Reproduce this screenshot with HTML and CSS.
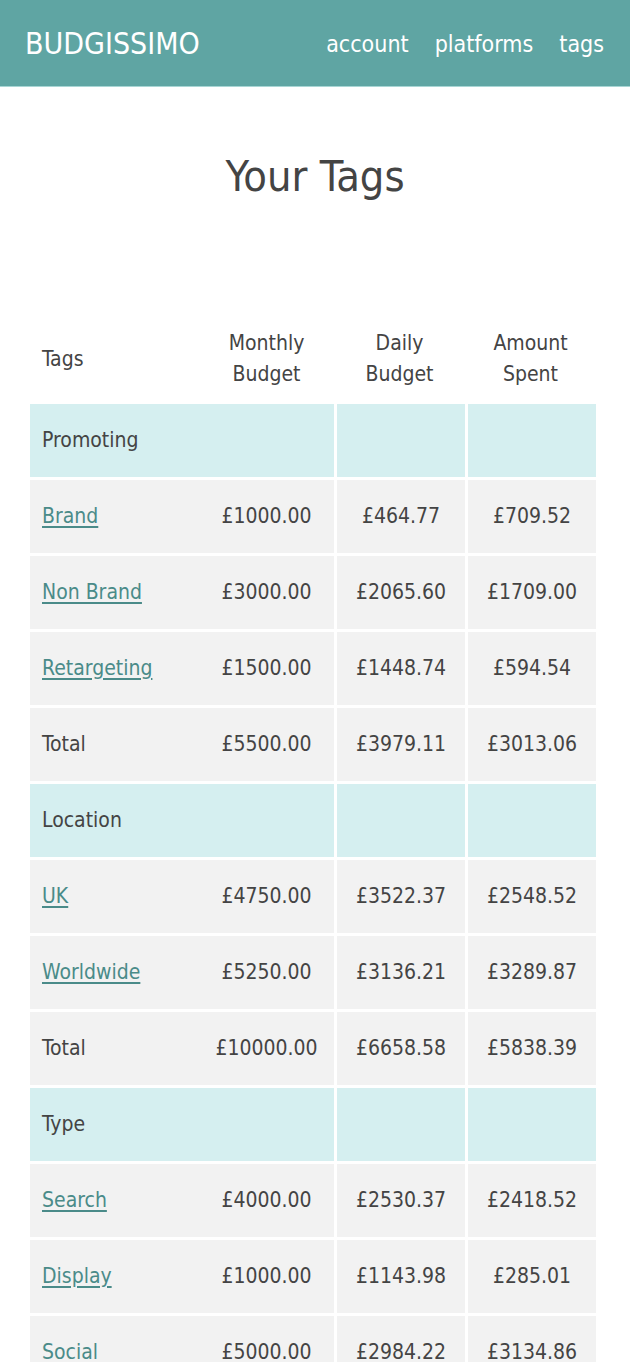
FILE: index.html
```html
<!DOCTYPE html>
<html lang="en">
<head>
<meta charset="utf-8">
<title>Budgissimo - Your Tags</title>
<link rel="stylesheet" href="styles.css">
</head>
<body>
<header class="topbar">
  <a class="logo" href="#">BUDGISSIMO</a>
  <nav class="nav">
    <a href="#">account</a>
    <a href="#">platforms</a>
    <a href="#">tags</a>
  </nav>
</header>
<main class="content">
  <h1 class="title">Your Tags</h1>
  <table class="tags">
    <colgroup>
      <col class="c1"><col class="c2"><col class="c3"><col class="c4">
    </colgroup>
    <thead>
      <tr>
        <th class="name">Tags</th>
        <th>Monthly<br>Budget</th>
        <th>Daily<br>Budget</th>
        <th>Amount<br>Spent</th>
      </tr>
    </thead>
    <tbody>
      <tr class="group"><td class="name">Promoting</td><td></td><td class="sep"></td><td class="sep"></td></tr>
      <tr><td class="name"><a href="#">Brand</a></td><td>£1000.00</td><td class="sep">£464.77</td><td class="sep">£709.52</td></tr>
      <tr><td class="name"><a href="#">Non Brand</a></td><td>£3000.00</td><td class="sep">£2065.60</td><td class="sep">£1709.00</td></tr>
      <tr><td class="name"><a href="#">Retargeting</a></td><td>£1500.00</td><td class="sep">£1448.74</td><td class="sep">£594.54</td></tr>
      <tr><td class="name">Total</td><td>£5500.00</td><td class="sep">£3979.11</td><td class="sep">£3013.06</td></tr>
      <tr class="group"><td class="name">Location</td><td></td><td class="sep"></td><td class="sep"></td></tr>
      <tr><td class="name"><a href="#">UK</a></td><td>£4750.00</td><td class="sep">£3522.37</td><td class="sep">£2548.52</td></tr>
      <tr><td class="name"><a href="#">Worldwide</a></td><td>£5250.00</td><td class="sep">£3136.21</td><td class="sep">£3289.87</td></tr>
      <tr><td class="name">Total</td><td>£10000.00</td><td class="sep">£6658.58</td><td class="sep">£5838.39</td></tr>
      <tr class="group"><td class="name">Type</td><td></td><td class="sep"></td><td class="sep"></td></tr>
      <tr><td class="name"><a href="#">Search</a></td><td>£4000.00</td><td class="sep">£2530.37</td><td class="sep">£2418.52</td></tr>
      <tr><td class="name"><a href="#">Display</a></td><td>£1000.00</td><td class="sep">£1143.98</td><td class="sep">£285.01</td></tr>
      <tr><td class="name"><a href="#">Social</a></td><td>£5000.00</td><td class="sep">£2984.22</td><td class="sep">£3134.86</td></tr>
    </tbody>
  </table>
</main>
</body>
</html>
```
FILE: styles.css
```css
html, body {
  margin: 0;
  padding: 0;
  background: #ffffff;
}
body {
  font-family: "DejaVu Sans Condensed", "Liberation Sans", sans-serif;
  color: #444444;
}
.topbar {
  height: 87px;
  background: #5fa5a3;
  display: flex;
  align-items: center;
  justify-content: space-between;
  padding: 0 26px 0 25px;
  box-sizing: border-box;
  border-bottom: 1px solid #a8d6d5;
}
.logo {
  color: #ffffff;
  text-decoration: none;
  font-size: 30px;
  line-height: 1;
  padding-top: 1px;
}
.nav {
  display: flex;
  gap: 26px;
}
.nav a {
  color: #ffffff;
  text-decoration: none;
  font-size: 23px;
  line-height: 1;
  padding-top: 2px;
}
.content {
  padding-top: 63px;
}
.title {
  margin: 0 0 126px;
  text-align: center;
  font-weight: normal;
  font-size: 43px;
  line-height: 52px;
  color: #444444;
}
.tags {
  width: 566px;
  margin: 0 0 0 30px;
  border-collapse: separate;
  border-spacing: 0;
  table-layout: fixed;
  font-size: 21px;
}
.c1 { width: 169px; }
.c2 { width: 135px; }
.c3 { width: 131px; }
.c4 { width: 131px; }
.tags th {
  font-weight: normal;
  text-align: center;
  line-height: 31px;
  padding: 0 0 14px;
  vertical-align: middle;
}
.tags td {
  height: 73px;
  padding: 0;
  text-align: center;
  vertical-align: middle;
  background: #f2f2f2;
  border-bottom: 3px solid #ffffff;
  line-height: 1;
}
.tags .name {
  text-align: left;
  padding-left: 12px;
}
.tags td.sep {
  border-left: 3px solid #ffffff;
}
.tags tr.group td {
  background: #d5eff0;
}
.tags a {
  color: #4a8b89;
  text-decoration: underline;
  text-underline-offset: 3px;
}
```
